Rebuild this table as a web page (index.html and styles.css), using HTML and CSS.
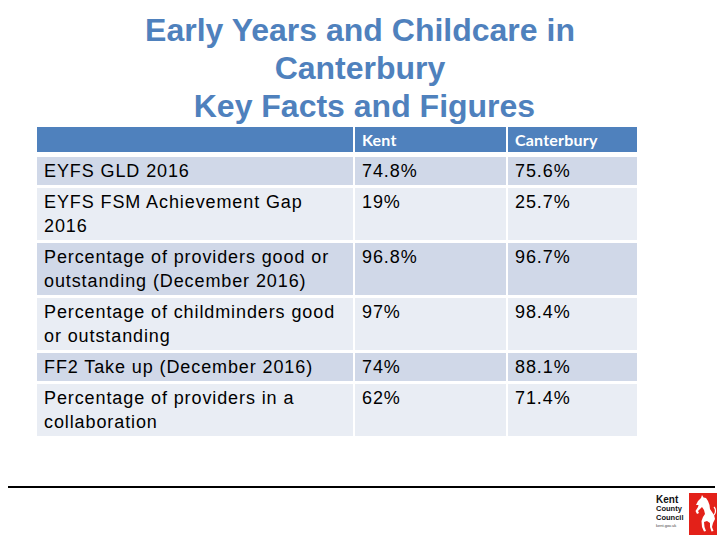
FILE: index.html
```html
<!DOCTYPE html>
<html lang="en">
<head>
<meta charset="utf-8">
<title>Early Years and Childcare in Canterbury</title>
<link rel="stylesheet" href="styles.css">
</head>
<body>
<h1 class="title">Early Years and Childcare in<br>Canterbury<br>&nbsp;Key Facts and Figures</h1>
<div class="facts">
  <div class="cell head"></div>
  <div class="cell head">Kent</div>
  <div class="cell head">Canterbury</div>

  <div class="cell odd">EYFS GLD 2016</div>
  <div class="cell odd">74.8%</div>
  <div class="cell odd">75.6%</div>

  <div class="cell even">EYFS FSM Achievement Gap<br>2016</div>
  <div class="cell even">19%</div>
  <div class="cell even">25.7%</div>

  <div class="cell odd">Percentage of providers good or<br>outstanding (December 2016)</div>
  <div class="cell odd">96.8%</div>
  <div class="cell odd">96.7%</div>

  <div class="cell even">Percentage of childminders good<br>or outstanding</div>
  <div class="cell even">97%</div>
  <div class="cell even">98.4%</div>

  <div class="cell odd">FF2 Take up (December 2016)</div>
  <div class="cell odd">74%</div>
  <div class="cell odd">88.1%</div>

  <div class="cell even">Percentage of providers in a<br>collaboration</div>
  <div class="cell even">62%</div>
  <div class="cell even">71.4%</div>
</div>
<div class="rule"></div>
<div class="footer">
  <div class="logo">
    <div class="logo-text">
      <span class="lt-kent">Kent</span>
      <span class="lt-line">County</span>
      <span class="lt-line">Council</span>
      <span class="lt-small">kent.gov.uk</span>
    </div>
    <div class="logo-mark">
      <svg viewBox="0 0 28 42" width="28" height="42" aria-hidden="true">
        <path fill="#fff" d="M7 12 L9 8 L12 5 L13 2 L14.5 4.5 L17 5 L19 8 L20.5 12 L21 16 L23 19 L25 22 L26 26 L24 30 L23 34 L24.5 38 L22.5 38.5 L21 34 L21 30 L18 28 L15 29 L15.5 34 L17 38 L15 38.5 L13 34 L12.5 28 L14 24 L16 21 L15 17 L13 14 L11 16 L9 18 L10 20 L8 21 L6.5 18 L9 14 L9.5 12 Z"/>
        <path fill="none" stroke="#fff" stroke-width="1.2" d="M25 22 C27 20 27 16 25 14"/>
      </svg>
    </div>
  </div>
</div>
</body>
</html>
```

FILE: styles.css
```css
html, body {
  margin: 0;
  padding: 0;
  background: #ffffff;
}

body {
  width: 720px;
  height: 540px;
  overflow: hidden;
  font-family: "Liberation Sans", Arial, sans-serif;
  color: #000;
}

.title {
  margin: 0;
  padding-top: 11px;
  font-size: 32px;
  line-height: 38px;
  font-weight: bold;
  color: #4f81bd;
  text-align: center;
}

.facts {
  display: grid;
  grid-template-columns: 316px 151px 129px;
  column-gap: 2px;
  row-gap: 3px;
  width: 600px;
  margin: 2px 0 0 37px;
}

.cell {
  padding: 2px 2px 2px 7px;
  font-size: 18px;
  line-height: 24px;
  letter-spacing: 0.9px;
  white-space: nowrap;
}

.head {
  height: 25px;
  padding: 0 7px;
  margin-bottom: 2px;
  box-sizing: border-box;
  background: #4f81bd;
  color: #fff;
  font-family: Lato, "Open Sans", sans-serif;
  font-weight: 700;
  font-size: 16px;
  line-height: 26px;
  letter-spacing: 0.2px;
}

.odd {
  background: #d0d8e8;
}

.even {
  background: #e9edf4;
}

.rule {
  height: 2px;
  background: #000;
  margin: 50px 5px 0 8px;
}

.footer {
  display: flex;
  justify-content: flex-end;
  padding: 5px 3px 0 0;
}

.logo {
  display: flex;
  align-items: flex-start;
  gap: 3px;
  background: #fff;
}

.logo-text {
  display: flex;
  flex-direction: column;
  padding-top: 2px;
  width: 30px;
  font-family: "Liberation Sans", Arial, sans-serif;
  color: #111;
}

.lt-kent {
  font-size: 10px;
  line-height: 10px;
  font-weight: bold;
}

.lt-line {
  font-size: 7.5px;
  line-height: 8.5px;
  font-weight: bold;
}

.lt-small {
  font-size: 4px;
  line-height: 7px;
  color: #444;
}

.logo-mark {
  width: 28px;
  height: 42px;
  background: #e32119;
}

.logo-mark svg {
  display: block;
}
```
